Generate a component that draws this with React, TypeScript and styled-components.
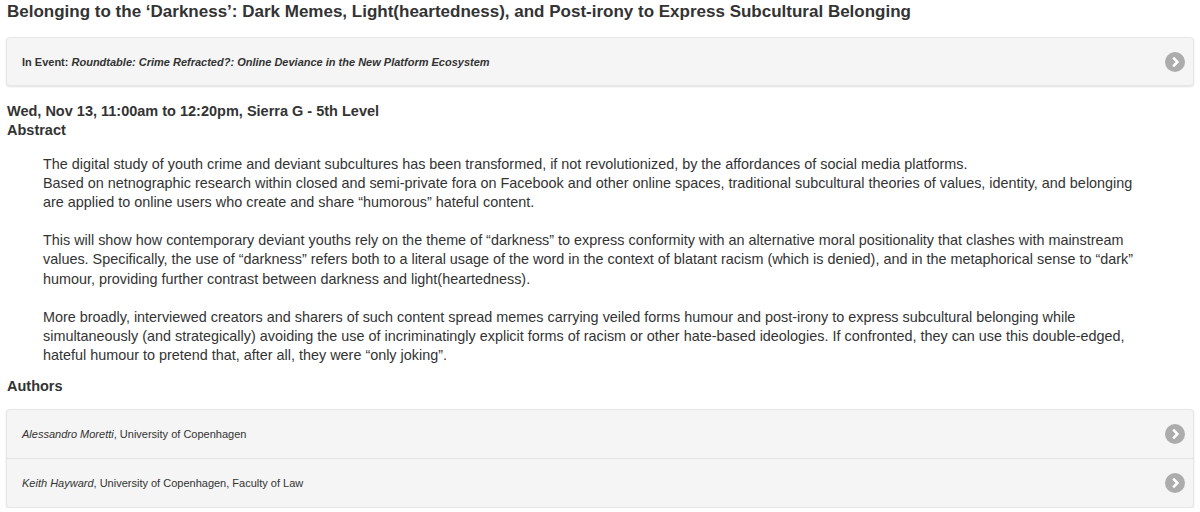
import React from "react";
import styled, { createGlobalStyle } from "styled-components";

const Global = createGlobalStyle`
  html, body { margin: 0; padding: 0; background: #fff; }
  body {
    font-family: "Liberation Sans", Arial, Helvetica, sans-serif;
    color: #333;
  }
`;

const Page = styled.div`
  padding: 2px 7px 0 7px;
  width: 1186px;
  box-sizing: content-box;
`;

const Title = styled.h1`
  margin: 0;
  font-size: 17px;
  line-height: 20px;
  font-weight: bold;
  color: #333;
`;

const Card = styled.div<{ $mt: number }>`
  margin: ${(p) => p.$mt}px -1px 0 -1px;
  background: #f5f5f5;
  border: 1px solid #e6e6e6;
  border-radius: 4px;
  box-shadow: 0 1px 2px rgba(0, 0, 0, 0.12);
  overflow: hidden;
`;

const Row = styled.div<{ $h: number }>`
  display: flex;
  align-items: center;
  justify-content: space-between;
  height: ${(p) => p.$h}px;
  padding: 0 8px 0 15px;
  font-size: 11px;
  color: #333;
  & + & {
    border-top: 1px solid #e4e4e4;
  }
`;

const Label = styled.span<{ $bold?: boolean }>`
  font-weight: ${(p) => (p.$bold ? "bold" : "normal")};
`;

const Em = styled.i``;

const Meta = styled.div`
  margin-top: 16px;
  font-size: 14.5px;
  line-height: 19px;
  font-weight: bold;
`;

const Abstract = styled.div`
  margin: 15px 43px 0 36px;
  font-size: 14.4px;
  line-height: 19.1px;
`;

const Heading = styled.div`
  margin-top: 12px;
  font-size: 14.5px;
  line-height: 19px;
  font-weight: bold;
`;

const Circle = styled.svg`
  flex: none;
  width: 20px;
  height: 20px;
`;

const Chevron = () => (
  <Circle viewBox="0 0 20 20">
    <circle cx="10" cy="10" r="10" fill="#acacac" />
    <path d="M8.2 5.6 L12.4 10 L8.2 14.4" fill="none" stroke="#fff" strokeWidth="2.6" strokeLinecap="butt" strokeLinejoin="miter" />
  </Circle>
);

export default function App() {
  return (
    <>
      <Global />
      <Page>
        <Title>
          Belonging to the ‘Darkness’: Dark Memes, Light(heartedness), and Post-irony to Express Subcultural Belonging
        </Title>
        <Card $mt={15}>
          <Row $h={47}>
            <span>
              <Label $bold>In Event: </Label>
              <Em>
                <Label $bold>Roundtable: Crime Refracted?: Online Deviance in the New Platform Ecosystem</Label>
              </Em>
            </span>
            <Chevron />
          </Row>
        </Card>
        <Meta>
          Wed, Nov 13, 11:00am to 12:20pm, Sierra G - 5th Level
          <br />
          Abstract
        </Meta>
        <Abstract>
          The digital study of youth crime and deviant subcultures has been transformed, if not revolutionized, by the affordances of social media platforms.
          <br />
          Based on netnographic research within closed and semi-private fora on Facebook and other online spaces, traditional subcultural theories of values, identity, and belonging are applied to online users who create and share “humorous” hateful content.
          <br />
          <br />
          This will show how contemporary deviant youths rely on the theme of “darkness” to express conformity with an alternative moral positionality that clashes with mainstream values. Specifically, the use of “darkness” refers both to a literal usage of the word in the context of blatant racism (which is denied), and in the metaphorical sense to “dark” humour, providing further contrast between darkness and light(heartedness).
          <br />
          <br />
          More broadly, interviewed creators and sharers of such content spread memes carrying veiled forms humour and post-irony to express subcultural belonging while simultaneously (and strategically) avoiding the use of incriminatingly explicit forms of racism or other hate-based ideologies. If confronted, they can use this double-edged, hateful humour to pretend that, after all, they were “only joking”.
        </Abstract>
        <Heading>Authors</Heading>
        <Card $mt={13}>
          <Row $h={48}>
            <span>
              <Em>Alessandro Moretti</Em>, University of Copenhagen
            </span>
            <Chevron />
          </Row>
          <Row $h={48}>
            <span>
              <Em>Keith Hayward</Em>, University of Copenhagen, Faculty of Law
            </span>
            <Chevron />
          </Row>
        </Card>
      </Page>
    </>
  );
}
